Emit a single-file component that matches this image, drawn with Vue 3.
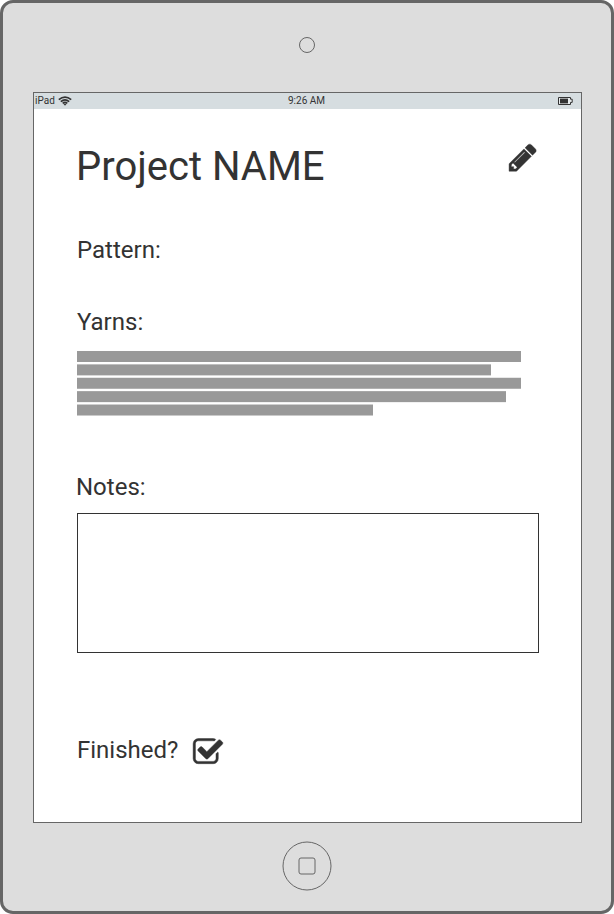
<script setup>
const lineWidths = [444, 414, 444, 429, 296]
const linePitch = 13.38
</script>

<template>
  <div class="device">
    <div class="top-bezel"><span class="camera"></span></div>
    <main class="screen">
      <header class="status">
        <div class="carrier">
          <span>iPad</span>
          <svg class="wifi" width="14" height="10" viewBox="0 0 14 10">
            <path d="M.8 3.7Q7-1.4 13.2 3.7M2.8 5.6Q7 2 11.2 5.6M4.7 7.4Q7 5.4 9.3 7.4" fill="none" stroke="#333" stroke-width="1.7" />
            <path d="M5.5 8.1Q7 7 8.5 8.1L7 9.8Z" fill="#333" />
          </svg>
        </div>
        <span class="time">9:26 AM</span>
        <div class="power">
          <svg width="15" height="10" viewBox="0 0 15 10">
            <path d="M.5 1.5H12.5V3.2H14.2V6.4H12.5V8.5H.5Z" fill="#e6eaeb" stroke="#333" stroke-width="1" />
            <rect x="2" y="2.6" width="8" height="4.8" fill="#333" />
          </svg>
        </div>
      </header>
      <section class="content">
        <div class="title-row">
          <h1>Project NAME</h1>
          <svg class="pencil" width="32" height="32" viewBox="11 -28 1792 1792" fill="#333" stroke="#333" stroke-width="24">
            <path d="M491 1536l91-91-235-235-91 91v107h128v128h107zm523-928q0-22-22-22-10 0-17 7l-542 542q-7 7-7 17 0 22 22 22 10 0 17-7l542-542q7-7 7-17zm-54-192l416 416-832 832h-416v-416zm683 96q0 53-37 90l-166 166-416-416 166-165q36-38 90-38 53 0 91 38l235 234q37 39 37 91z" />
          </svg>
        </div>
        <h2 class="pattern">Pattern:</h2>
        <h2 class="yarns">Yarns:</h2>
        <svg class="lines" width="444" height="66" viewBox="0 0 444 66">
          <rect v-for="(w, i) in lineWidths" :key="i" x="0" :y="i * linePitch" :width="w" height="11" fill="#999" />
        </svg>
        <h2 class="notes-label">Notes:</h2>
        <div class="notes"></div>
        <div class="finished">
          <h2>Finished?</h2>
          <svg class="check" width="32" height="32" viewBox="0 -14 1792 1792" fill="#333" stroke="#333" stroke-width="26">
            <path d="M1472 930v318q0 119-84.5 203.5t-203.5 84.5h-832q-119 0-203.5-84.5t-84.5-203.5v-832q0-119 84.5-203.5t203.5-84.5h832q63 0 117 25 15 7 18 23 3 17-9 29l-49 49q-10 10-23 10-3 0-9-2-23-6-45-6h-832q-66 0-113 47t-47 113v832q0 66 47 113t113 47h832q66 0 113-47t47-113v-254q0-13 9-22l64-64q10-10 23-10 6 0 12 3 20 8 20 29zm231-489l-814 814q-24 24-57 24t-57-24l-430-430q-24-24-24-57t24-57l110-110q24-24 57-24t57 24l263 263 647-647q24-24 57-24t57 24l110 110q24 24 24 57t-24 57z" />
          </svg>
        </div>
      </section>
    </main>
    <footer class="bottom-bezel">
      <svg width="50" height="50" viewBox="0 0 50 50" fill="none" stroke="#666">
        <circle cx="25" cy="25" r="24" />
        <rect x="17" y="17" width="16" height="16" rx="2" />
      </svg>
    </footer>
  </div>
</template>

<style>
body {
  background: #fff;
}
</style>

<style scoped>
* {
  box-sizing: border-box;
}
.device {
  width: 614px;
  height: 914px;
  display: flex;
  flex-direction: column;
  align-items: center;
  background: #ddd;
  border: 3px solid #666;
  border-radius: 13px;
  color: #333;
  font-family: Roboto, sans-serif;
}
.top-bezel {
  height: 89px;
  padding-top: 34px;
}
.camera {
  display: block;
  width: 16px;
  height: 16px;
  border: 1px solid #666;
  border-radius: 50%;
}
.screen {
  width: 549px;
  height: 731px;
  margin-left: 1px;
  background: #fff;
  border: 1px solid #666;
}
.status {
  height: 16px;
  display: grid;
  grid-template-columns: 1fr auto 1fr;
  align-items: center;
  background: #d6dde0;
  font-size: 10px;
  line-height: 16px;
}
.carrier {
  display: flex;
  align-items: center;
  gap: 3px;
  padding-left: 1px;
}
.time {
  margin-right: 2px;
}
.power {
  display: flex;
  justify-content: flex-end;
  padding-right: 8px;
}
.content {
  display: flex;
  flex-direction: column;
  padding: 32px 42px 0 43px;
}
.title-row {
  display: flex;
  justify-content: space-between;
  height: 50px;
}
h1,
h2 {
  margin: 0;
  font-weight: 400;
}
h1 {
  margin-left: -1px;
  font-size: 40px;
  line-height: 52px;
}
h2 {
  font-size: 24px;
  line-height: 30px;
}
.pattern {
  margin-top: 44px;
}
.yarns {
  margin-top: 42px;
}
.lines {
  display: block;
  margin-top: 14px;
}
.notes-label {
  margin-top: 55px;
  margin-left: -1px;
}
.notes {
  height: 140px;
  width: 462px;
  margin-top: 11px;
  border: 1px solid #333;
}
.finished {
  display: flex;
  align-items: flex-start;
  gap: 14px;
  margin-top: 82px;
}
.check {
  margin-top: 1px;
}
.bottom-bezel {
  padding-top: 18px;
}
.bottom-bezel svg {
  display: block;
}
</style>
